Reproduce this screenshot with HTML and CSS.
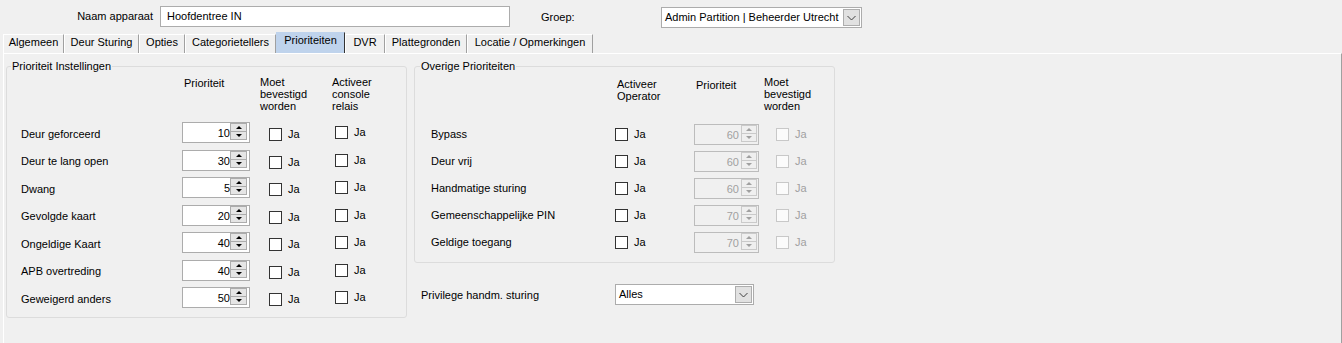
FILE: index.html
```html
<!DOCTYPE html>
<html>
<head>
<meta charset="utf-8">
<link rel="stylesheet" href="styles.css">
</head>
<body>
<div class="header">
  <div class="lbl lbl-naam">Naam apparaat</div>
  <div class="textbox">Hoofdentree IN</div>
  <div class="lbl lbl-groep">Groep:</div>
  <div class="combo combo-groep">
    <span class="combo-text">Admin Partition | Beheerder Utrecht</span>
    <svg class="combo-btn" viewBox="0 0 17 17" width="17" height="17"><rect x="0.5" y="0.5" width="16" height="16" fill="#e1e1e1" stroke="#adadad"/><path d="M4.5 7 L8.5 11 L12.5 7" fill="none" stroke="#404040" stroke-width="1"/></svg>
  </div>
</div>

<div class="tabs">
  <div class="tab w1">Algemeen</div>
  <div class="tab w2">Deur Sturing</div>
  <div class="tab w3">Opties</div>
  <div class="tab w4">Categorietellers</div>
  <div class="tab w5 sel">Prioriteiten</div>
  <div class="tab w6">DVR</div>
  <div class="tab w7">Plattegronden</div>
  <div class="tab w8">Locatie / Opmerkingen</div>
</div>

<div class="panel">
  <div class="group group-left">
    <div class="legend">Prioriteit Instellingen</div>
    <div class="hdr">
      <div></div>
      <div class="h-off1">Prioriteit</div>
      <div>Moet<br>bevestigd<br>worden</div>
      <div>Activeer<br>console<br>relais</div>
    </div>
    <div class="rows">
      <div class="row"><div class="name">Deur geforceerd</div><div class="spin"><span class="val">10</span><span class="sb"><i class="up"></i><i class="dn"></i></span></div><div class="chk low"><span class="box"></span>Ja</div><div class="chk"><span class="box"></span>Ja</div></div>
      <div class="row"><div class="name">Deur te lang open</div><div class="spin"><span class="val">30</span><span class="sb"><i class="up"></i><i class="dn"></i></span></div><div class="chk low"><span class="box"></span>Ja</div><div class="chk"><span class="box"></span>Ja</div></div>
      <div class="row"><div class="name">Dwang</div><div class="spin"><span class="val">5</span><span class="sb"><i class="up"></i><i class="dn"></i></span></div><div class="chk low"><span class="box"></span>Ja</div><div class="chk"><span class="box"></span>Ja</div></div>
      <div class="row"><div class="name">Gevolgde kaart</div><div class="spin"><span class="val">20</span><span class="sb"><i class="up"></i><i class="dn"></i></span></div><div class="chk low"><span class="box"></span>Ja</div><div class="chk"><span class="box"></span>Ja</div></div>
      <div class="row"><div class="name">Ongeldige Kaart</div><div class="spin"><span class="val">40</span><span class="sb"><i class="up"></i><i class="dn"></i></span></div><div class="chk low"><span class="box"></span>Ja</div><div class="chk"><span class="box"></span>Ja</div></div>
      <div class="row"><div class="name">APB overtreding</div><div class="spin"><span class="val">40</span><span class="sb"><i class="up"></i><i class="dn"></i></span></div><div class="chk low"><span class="box"></span>Ja</div><div class="chk"><span class="box"></span>Ja</div></div>
      <div class="row"><div class="name">Geweigerd anders</div><div class="spin"><span class="val">50</span><span class="sb"><i class="up"></i><i class="dn"></i></span></div><div class="chk low"><span class="box"></span>Ja</div><div class="chk"><span class="box"></span>Ja</div></div>
    </div>
  </div>

  <div class="right-col">
    <div class="group group-right">
      <div class="legend">Overige Prioriteiten</div>
      <div class="hdr">
        <div></div>
        <div class="h-off2">Activeer<br>Operator</div>
        <div class="h-off3">Prioriteit</div>
        <div>Moet<br>bevestigd<br>worden</div>
      </div>
      <div class="rows">
        <div class="row"><div class="name">Bypass</div><div class="chk"><span class="box"></span>Ja</div><div class="spin dis"><span class="val">60</span><span class="sb"><i class="up"></i><i class="dn"></i></span></div><div class="chk dis"><span class="box"></span>Ja</div></div>
        <div class="row"><div class="name">Deur vrij</div><div class="chk"><span class="box"></span>Ja</div><div class="spin dis"><span class="val">60</span><span class="sb"><i class="up"></i><i class="dn"></i></span></div><div class="chk dis"><span class="box"></span>Ja</div></div>
        <div class="row"><div class="name">Handmatige sturing</div><div class="chk"><span class="box"></span>Ja</div><div class="spin dis"><span class="val">60</span><span class="sb"><i class="up"></i><i class="dn"></i></span></div><div class="chk dis"><span class="box"></span>Ja</div></div>
        <div class="row"><div class="name">Gemeenschappelijke PIN</div><div class="chk"><span class="box"></span>Ja</div><div class="spin dis"><span class="val">70</span><span class="sb"><i class="up"></i><i class="dn"></i></span></div><div class="chk dis"><span class="box"></span>Ja</div></div>
        <div class="row"><div class="name">Geldige toegang</div><div class="chk"><span class="box"></span>Ja</div><div class="spin dis"><span class="val">70</span><span class="sb"><i class="up"></i><i class="dn"></i></span></div><div class="chk dis"><span class="box"></span>Ja</div></div>
      </div>
    </div>
    <div class="priv">
      <div class="priv-lbl">Privilege handm. sturing</div>
      <div class="combo combo-priv">
        <span class="combo-text">Alles</span>
        <svg class="combo-btn" viewBox="0 0 17 17" width="17" height="17"><rect x="0.5" y="0.5" width="16" height="16" fill="#e1e1e1" stroke="#adadad"/><path d="M4.5 7 L8.5 11 L12.5 7" fill="none" stroke="#404040" stroke-width="1"/></svg>
      </div>
    </div>
  </div>
</div>
</body>
</html>
```

FILE: styles.css
```css
* { box-sizing: border-box; }
html, body { margin: 0; padding: 0; }
body {
  background: #f0f0f0;
  font-family: "Liberation Sans", Arial, sans-serif;
  font-size: 11px;
  color: #000;
  width: 1342px;
  height: 343px;
  overflow: hidden;
}

/* header */
.header { display: flex; align-items: flex-start; height: 32px; padding-top: 6px; }
.lbl { line-height: 21px; white-space: nowrap; }
.lbl-naam { width: 153px; text-align: right; margin-right: 7px; }
.textbox {
  width: 350px; height: 21px; background: #fff; border: 1px solid #acacac;
  padding-left: 6px; line-height: 19px; white-space: nowrap;
}
.lbl-groep { margin-left: 31px; width: 120px; line-height: 22px; }

.combo { display: flex; height: 21px; background: #fff; border: 1px solid #acacac; }
.combo-groep { width: 201px; margin-top: 1px; }
.combo-priv { width: 139px; }
.combo-text { flex: 1; padding-left: 3px; line-height: 19px; overflow: hidden; white-space: nowrap; }
.combo-btn { display: block; width: 17px; height: 17px; margin: 1px; flex: none; }

/* tabs */
.tabs { display: flex; align-items: flex-end; height: 21px; padding-left: 3px; }
.tab {
  height: 19px; padding-top: 1px; line-height: 13px; text-align: center; white-space: nowrap;
  border-top: 1px solid #fff; border-left: 1px solid #fff; border-right: 1px solid #a0a0a0;
}
.tab.sel {
  height: 21px; background: #bfd3ec;
  border-top-color: #bfd3ec; border-left-color: #bfd3ec; border-right-color: #333;
}
.w1 { width: 61px; }
.w2 { width: 75px; }
.w3 { width: 46px; }
.w4 { width: 91px; }
.w5 { width: 69px; }
.w6 { width: 40px; }
.w7 { width: 82px; }
.w8 { width: 126px; }

/* panel */
.panel {
  display: flex; align-items: flex-start;
  margin-left: 3px; height: 290px;
  border-top: 1px solid #fff; border-left: 1px solid #fff; border-right: 1px solid #a0a0a0;
  padding: 12px 0 0 2px;
}

.group { border: 1px solid #dcdcdc; border-radius: 3px; }
.group-left { width: 401px; height: 252px; }
.right-col { margin-left: 7px; }
.group-right { width: 421px; height: 197px; }

.legend {
  width: fit-content; margin: -7px 0 0 4px; padding: 0 1px;
  background: #f0f0f0; line-height: 13px; white-space: nowrap;
}
.group-right .legend { margin-left: 5px; }

.hdr { display: grid; margin-top: 3px; line-height: 12px; align-items: start; }
.group-left .hdr { grid-template-columns: 163px 76px 72px 1fr; padding-left: 14px; }
.group-right .hdr { grid-template-columns: 186px 79px 68px 1fr; padding-left: 16px; }
.h-off1 { margin-top: 1px; }
.h-off2 { margin-top: 2px; }
.h-off3 { margin-top: 3px; }

.row { display: grid; align-items: center; }
.group-left .rows { margin-top: 7px; }
.group-left .row { grid-template-columns: 161px 87px 66px 1fr; height: 27.5px; padding-left: 14px; }
.group-left .name { margin-top: 3px; }
.group-right .rows { margin-top: 8.5px; }
.group-right .row { grid-template-columns: 184px 79px 82px 1fr; height: 27px; padding-left: 16px; }

.name { white-space: nowrap; line-height: 13px; }

/* checkbox */
.chk { display: flex; align-items: center; line-height: 13px; }
.chk.low { margin-top: 3.5px; }
.box { width: 13px; height: 13px; border: 1px solid #333; background: #fff; margin-right: 6px; flex: none; }
.chk.dis { color: #a0a0a0; }
.chk.dis .box { border-color: #c8c8c8; background: #fbfbfb; }

/* spinner */
.spin { display: flex; height: 21px; width: 68px; background: #fff; border: 1px solid #acacac; }
.spin .val { flex: 1; text-align: right; line-height: 20px; }
.sb {
  width: 17px; height: 17px; margin-right: 2px; flex: none;
  display: flex; flex-direction: column;
  border: 1px solid #acacac; background: #e5e5e5;
}
.sb i { flex: 1; display: flex; align-items: center; justify-content: center; }
.sb i.up { border-bottom: 1px solid #acacac; }
.sb i::after { content: ""; border-left: 3px solid transparent; border-right: 3px solid transparent; }
.sb i.up::after { border-bottom: 3px solid #000; }
.sb i.dn::after { border-top: 3px solid #000; }

.spin.dis { width: 65px; background: #f0f0f0; border-color: #bcbcbc; color: #a0a0a0; }
.spin.dis .val { padding-right: 2px; }
.spin.dis .sb { width: 16px; margin-right: 1px; border-color: #cacaca; background: #efefef; }
.spin.dis .sb i.up { border-bottom-color: #cacaca; }
.spin.dis .sb i.up::after { border-bottom-color: #a0a0a0; }
.spin.dis .sb i.dn::after { border-top-color: #a0a0a0; }

/* privilege */
.priv { display: flex; align-items: center; margin-top: 21px; padding-left: 7px; }
.priv-lbl { width: 194px; white-space: nowrap; }
```
